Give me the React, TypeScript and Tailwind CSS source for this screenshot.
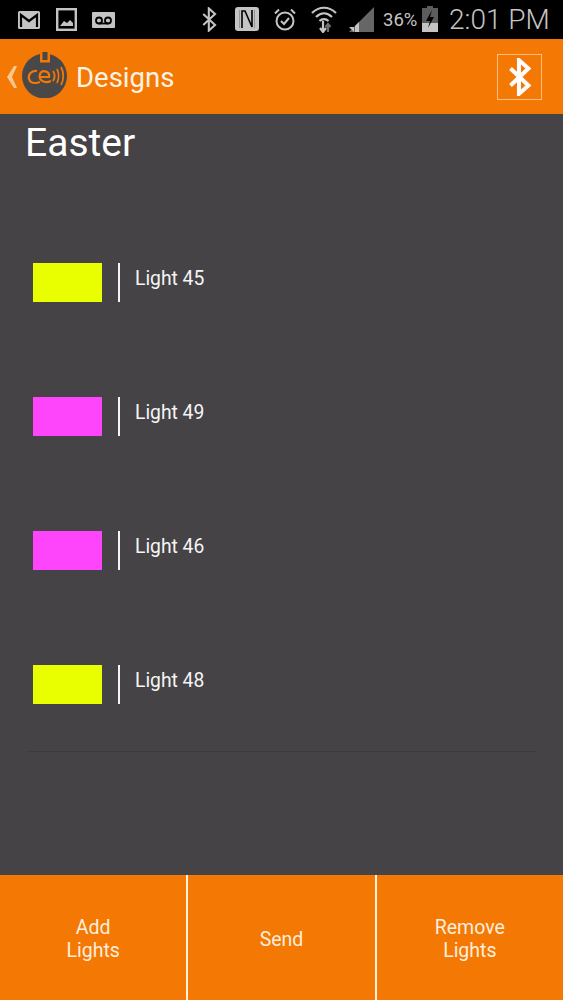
import React from 'react';

const lights = [
  { name: 'Light 45', color: 'bg-[#e9ff00]' },
  { name: 'Light 49', color: 'bg-[#ff45fb]' },
  { name: 'Light 46', color: 'bg-[#ff45fb]' },
  { name: 'Light 48', color: 'bg-[#e9ff00]' },
];

const BluetoothGlyph = ({ className, strokeWidth = 2 }: { className: string; strokeWidth?: number }) => (
  <svg viewBox="0 0 24 36" className={className} fill="none" stroke="currentColor" strokeWidth={strokeWidth}>
    <path d="M3 10 L20 26 L11 34 L11 2 L20 10 L3 26" strokeLinejoin="miter" />
  </svg>
);

const StatusBar = () => (
  <div className="h-[39px] bg-black flex items-center text-[#c4c4c4] relative shrink-0">
    {/* gmail */}
    <svg viewBox="0 0 22 18" className="absolute left-[18px] top-[11px] w-[22px] h-[18px]">
      <rect width="22" height="18" rx="1.5" fill="#c4c4c4" />
      <path d="M3 16 V4 L11 10 L19 4 V16" fill="none" stroke="#000" strokeWidth="2.2" />
    </svg>
    {/* image */}
    <svg viewBox="0 0 21 23" className="absolute left-[56px] top-[8px] w-[21px] h-[23px]">
      <rect x="1.2" y="1.2" width="18.6" height="20.6" fill="none" stroke="#c4c4c4" strokeWidth="2.4" />
      <path d="M4 18 L8 13 L11 15 L14 12 L17 15 V18 Z" fill="#c4c4c4" />
    </svg>
    {/* voicemail */}
    <svg viewBox="0 0 23 16" className="absolute left-[92px] top-[12px] w-[23px] h-[16px]">
      <rect width="23" height="16" rx="1" fill="#c4c4c4" />
      <circle cx="7" cy="8.5" r="3" fill="none" stroke="#000" strokeWidth="1.8" />
      <circle cx="16" cy="8.5" r="3" fill="none" stroke="#000" strokeWidth="1.8" />
      <path d="M7 11.5 H16" stroke="#000" strokeWidth="1.8" />
    </svg>
    <BluetoothGlyph className="absolute left-[201px] top-[7px] w-[17px] h-[25px]" strokeWidth={3} />
    {/* nfc */}
    <svg viewBox="0 0 24 24" className="absolute left-[235px] top-[7px] w-[24px] h-[24px]">
      <rect width="24" height="24" rx="3" fill="#c4c4c4" />
      <path d="M7 21 V4 L10 4 L17 20 L17 3" fill="none" stroke="#000" strokeWidth="1.6" />
      <path d="M4.5 21 V3 M19.5 21 V3" stroke="#8a8a8a" strokeWidth="0.8" />
    </svg>
    {/* alarm */}
    <svg viewBox="0 0 24 24" className="absolute left-[273px] top-[7px] w-[24px] h-[25px]" fill="none" stroke="#c4c4c4" strokeWidth="2">
      <circle cx="12" cy="13.5" r="8.5" />
      <path d="M8 13.5 L11 16.5 L16 10.5 M2 6 L6 2 M22 6 L18 2" />
    </svg>
    {/* wifi */}
    <svg viewBox="0 0 26 28" className="absolute left-[311px] top-[5px] w-[26px] h-[28px]" fill="none" stroke="#c4c4c4" strokeWidth="2.2">
      <path d="M1 8 C8 1 18 1 25 8 M5 12 C10 7 16 7 21 12 M8.5 16 C11 13.5 15 13.5 17.5 16" />
      <path d="M12 16 V27 M9 23 L12 27 L15 23" />
      <path d="M17 27 V19 M14.5 22 L17 19 L19.5 22" stroke="#6e6e6e" />
    </svg>
    {/* signal */}
    <svg viewBox="0 0 25 25" className="absolute left-[349px] top-[7px] w-[25px] h-[25px]">
      <path d="M25 0 V25 H0 Z" fill="#666" />
      <path d="M5 25 V20 H0 Z M6 25 V19 L10 15 V25 Z" fill="#c4c4c4" />
    </svg>
    <span className="absolute left-[383px] top-[9px] text-[18.5px] leading-[22px] font-['Roboto',sans-serif]">36%</span>
    {/* battery */}
    <svg viewBox="0 0 16 26" className="absolute left-[422px] top-[6px] w-[16px] h-[26px]">
      <path d="M5 0 H11 V2 H16 V26 H0 V2 H5 Z" fill="#5c5c5c" />
      <path d="M0 17 H16 V26 H0 Z" fill="#c4c4c4" />
      <path d="M10 4 L4 15 H8 L6 22 L12 11 H8 Z" fill="#000" />
    </svg>
    <span className="absolute left-[449px] top-[4px] text-[28px] leading-[32px] font-['Roboto',sans-serif] font-light">2:01 PM</span>
  </div>
);

const Header = () => (
  <div className="h-[75px] bg-[#f47804] flex items-center shrink-0 pl-[7px] pr-[21px]">
    <svg viewBox="0 0 10 22" className="w-[10px] h-[22px] text-[#fdc88f]" fill="currentColor">
      <path d="M7 0 H10 L5 11 L10 22 H7 L0 11 Z" />
    </svg>
    <svg viewBox="0 0 46 46" className="w-[46px] h-[46px] ml-[5px] mb-[3px]">
      <circle cx="22.5" cy="24" r="22.5" fill="#4a4749" />
      <rect x="18" y="1.5" width="10" height="9" fill="#f47804" />
      <rect x="20.5" y="0" width="5" height="8" fill="#4a4749" />
      <path d="M15 19 C9 18 6 23 7 27 C8 31 13 32 18 30" fill="none" stroke="#f47804" strokeWidth="2.2" />
      <path d="M17 25 H27 C28 19 20 17 18 22 C16 28 22 32 29 29" fill="none" stroke="#f47804" strokeWidth="2.2" />
      <path d="M31 19 C33 22 33 26 31 29 M35 17 C37 21 37 27 35 31 M39 15 C42 20 42 28 39 33" fill="none" stroke="#f47804" strokeWidth="1.8" />
    </svg>
    <span className="ml-[8px] mt-[3px] text-[27.5px] leading-[32px] text-[#fff3e4] font-['Roboto',sans-serif]">Designs</span>
    <button className="ml-auto w-[45px] h-[46px] border border-[#fbbf85] flex items-center justify-center text-white">
      <BluetoothGlyph className="w-[26px] h-[38px]" strokeWidth={3.8} />
    </button>
  </div>
);

const LightRow = ({ name, color }: { name: string; color: string }) => (
  <div className="h-[134px] flex items-start pl-[33px]">
    <div className={`w-[69px] h-[39px] ${color}`} />
    <div className="w-[2px] h-[39px] bg-[#f4f4f4] ml-[16px]" />
    <span className="ml-[15px] mt-[1px] text-[19.3px] leading-[30px] text-[#f5f5f5] font-['Roboto',sans-serif]">{name}</span>
  </div>
);

const FooterButton = ({ lines, border }: { lines: string[]; border?: boolean }) => (
  <button className={`flex-1 flex flex-col items-center justify-center pt-[3px] text-[19.5px] leading-[23px] text-[#ffeedd] font-['Roboto',sans-serif] ${border ? 'border-l-2 border-[#fff3e0]' : ''}`}>
    {lines.map((line) => (
      <span key={line}>{line}</span>
    ))}
  </button>
);

export default function App() {
  return (
    <div className="w-[563px] h-[1000px] flex flex-col overflow-hidden bg-[#454346]">
      <StatusBar />
      <Header />
      <div className="flex-1 flex flex-col">
        <h1 className="pl-[25px] pt-[8px] h-[149px] text-[39px] leading-[43px] text-white font-['Roboto',sans-serif]">Easter</h1>
        <div>
          {lights.map((light) => (
            <LightRow key={light.name} {...light} />
          ))}
        </div>
        <div className="-mt-[48px] mx-[27px] h-px bg-[#3d3b3e]" />
      </div>
      <div className="h-[125px] bg-[#f47804] flex shrink-0">
        <FooterButton lines={['Add', 'Lights']} />
        <FooterButton lines={['Send']} border />
        <FooterButton lines={['Remove', 'Lights']} border />
      </div>
    </div>
  );
}
